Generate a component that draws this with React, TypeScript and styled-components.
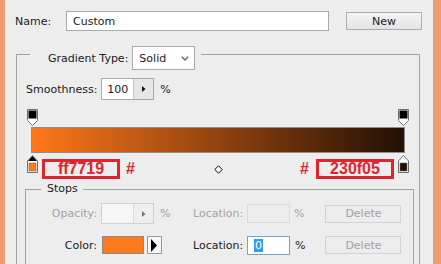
import React from 'react';
import styled, { createGlobalStyle } from 'styled-components';

const Global = createGlobalStyle`
  html, body { margin: 0; padding: 0; background: #ededed; }
  body { font-family: "DejaVu Sans", "Noto Sans", sans-serif; font-size: 11px; color: #1b1b1b; }
`;

const Frame = styled.div`
  width: 441px;
  height: 264px;
  overflow: hidden;
  display: flex;
  background: #ededed;
`;

const Edge = styled.div<{ $w: number }>`
  flex: 0 0 ${(p) => p.$w}px;
  background: #f09c72;
`;

const Panel = styled.div`
  flex: 1;
  min-width: 0;
  display: flex;
  flex-direction: column;
  padding-top: 11px;
`;

const NameRow = styled.div`
  display: flex;
  align-items: center;
  height: 20px;
  padding-left: 10px;
`;

const NameLabel = styled.span`
  width: 51px;
`;

const TextBox = styled.div`
  box-sizing: border-box;
  width: 263px;
  height: 20px;
  border: 1px solid #a9a9a9;
  background: #fff;
  padding-left: 6px;
  display: flex;
  align-items: center;
`;

const Button = styled.div<{ $disabled?: boolean; $ml: number }>`
  box-sizing: border-box;
  margin-left: ${(p) => p.$ml}px;
  width: 76px;
  height: 18px;
  display: flex;
  align-items: center;
  justify-content: center;
  border: 1px solid ${(p) => (p.$disabled ? '#d3d3d3' : '#acacac')};
  background: ${(p) => (p.$disabled ? '#ececec' : 'linear-gradient(#f3f3f3, #e4e4e4)')};
  color: ${(p) => (p.$disabled ? '#a2a2a2' : '#1b1b1b')};
`;

const Group = styled.div<{ $m: string }>`
  margin: ${(p) => p.$m};
  display: flex;
  flex-direction: column;
`;

const GroupHeader = styled.div<{ $h: number }>`
  display: flex;
  align-items: center;
  height: ${(p) => p.$h}px;
`;

const CornerLine = styled.div<{ $w: number; $h: number }>`
  box-sizing: border-box;
  align-self: flex-end;
  width: ${(p) => p.$w}px;
  height: ${(p) => p.$h}px;
  border-top: 1px solid #a3a3a3;
  border-left: 1px solid #a3a3a3;
`;

const TailLine = styled.div<{ $h: number; $ml: number }>`
  box-sizing: border-box;
  align-self: flex-end;
  flex: 1;
  margin-left: ${(p) => p.$ml}px;
  height: ${(p) => p.$h}px;
  border-top: 1px solid #a3a3a3;
  border-right: 1px solid #a3a3a3;
`;

const GroupBody = styled.div<{ $pt: number }>`
  border-left: 1px solid #a3a3a3;
  border-right: 1px solid #a3a3a3;
  padding: ${(p) => p.$pt}px 0 40px;
  display: flex;
  flex-direction: column;
`;

const HeaderText = styled.span<{ $ml: number }>`
  margin-left: ${(p) => p.$ml}px;
  white-space: nowrap;
`;

const Select = styled.div`
  box-sizing: border-box;
  margin-left: 4px;
  width: 63px;
  height: 24px;
  border: 1px solid #a9a9a9;
  background: #fff;
  display: flex;
  align-items: center;
  justify-content: space-between;
  padding: 0 5px 0 6px;
`;

const SmoothRow = styled.div`
  display: flex;
  align-items: center;
  height: 22px;
  padding-left: 9px;
`;

const SmoothLabel = styled.span`
  margin-right: 4px;
`;

const Spin = styled.div<{ $disabled?: boolean; $h: number }>`
  box-sizing: border-box;
  display: flex;
  width: 53px;
  height: ${(p) => p.$h}px;
  border: 1px solid ${(p) => (p.$disabled ? '#cfcfcf' : '#a9a9a9')};
`;

const SpinField = styled.div<{ $disabled?: boolean }>`
  flex: 0 0 31px;
  background: ${(p) => (p.$disabled ? '#f6f6f6' : '#fff')};
  display: flex;
  align-items: center;
  padding-left: 5px;
  box-sizing: border-box;
`;

const SpinArrow = styled.div<{ $disabled?: boolean }>`
  flex: 1;
  border-left: 1px solid ${(p) => (p.$disabled ? '#dadada' : '#c4c4c4')};
  background: ${(p) => (p.$disabled ? '#efefef' : '#e6e6e6')};
  display: flex;
  align-items: center;
  justify-content: center;
`;

const Percent = styled.span<{ $ml: number; $disabled?: boolean }>`
  margin-left: ${(p) => p.$ml}px;
  color: ${(p) => (p.$disabled ? '#a2a2a2' : '#1b1b1b')};
`;

const GradientArea = styled.div`
  margin: 9px 0 0 10px;
  width: 382px;
  display: flex;
  flex-direction: column;
`;

const StopRow = styled.div<{ $h: number; $mt: number }>`
  display: flex;
  justify-content: space-between;
  align-items: flex-start;
  height: ${(p) => p.$h}px;
  margin-top: ${(p) => p.$mt}px;
`;

const Bar = styled.div`
  margin: 1px 4px 0;
  height: 26px;
  box-sizing: border-box;
  border: 1px solid #8d8d8d;
  background: linear-gradient(to right, #ff7719, #230f05);
`;

const Cluster = styled.div`
  display: flex;
  align-items: flex-start;
`;

const RedBox = styled.div<{ $ml: number; $mr?: number }>`
  box-sizing: border-box;
  margin: 4px ${(p) => p.$mr ?? 0}px 0 ${(p) => p.$ml}px;
  width: 78px;
  height: 20px;
  border: 3px solid #e1242c;
  color: #e1242c;
  font: bold 16px/14px "Liberation Sans", Arial, sans-serif;
  text-align: center;
`;

const Hash = styled.span<{ $ml: number }>`
  margin: 4px 0 0 ${(p) => p.$ml}px;
  color: #e1242c;
  font: bold 16px/20px "Liberation Sans", Arial, sans-serif;
`;

const DiamondBox = styled.div`
  margin: 10px 0 0 2px;
  display: flex;
`;

const StopsRow = styled.div<{ $h: number; $mt: number }>`
  display: flex;
  align-items: center;
  height: ${(p) => p.$h}px;
  margin-top: ${(p) => p.$mt}px;
`;

const RowLabel = styled.span<{ $disabled?: boolean }>`
  width: 71px;
  margin-right: 4px;
  text-align: right;
  color: ${(p) => (p.$disabled ? '#a2a2a2' : '#1b1b1b')};
`;

const ControlCell = styled.div`
  width: 92px;
  display: flex;
  align-items: center;
`;

const Swatch = styled.div`
  box-sizing: border-box;
  margin-left: 1px;
  width: 42px;
  height: 18px;
  border: 1px solid #8a8a8a;
  background: #fd7a1c;
`;

const PickerButton = styled.div`
  box-sizing: border-box;
  margin-left: 3px;
  width: 15px;
  height: 18px;
  border: 1px solid #9a9a9a;
  background: #f7f7f7;
  display: flex;
  align-items: center;
  padding-left: 3px;
`;

const LocLabel = styled.span<{ $disabled?: boolean }>`
  width: 54px;
  color: ${(p) => (p.$disabled ? '#a2a2a2' : '#1b1b1b')};
`;

const LocInput = styled.div<{ $state: 'disabled' | 'focus' }>`
  box-sizing: border-box;
  width: 43px;
  height: 19px;
  display: flex;
  align-items: center;
  padding-left: 6px;
  border: 1px solid ${(p) => (p.$state === 'focus' ? '#7f9fcf' : '#d9d9d9')};
  background: ${(p) => (p.$state === 'focus' ? '#fff' : '#ececec')};
`;

const Selected = styled.span`
  background: #3399ff;
  color: #fff;
  padding: 0 1px;
  line-height: 13px;
`;

const TopStop = () => (
  <svg width="11" height="17" viewBox="0 0 11 17">
    <path d="M0.5 0.5H10.5V11.5L5.5 16.5L0.5 11.5Z" fill="#fff" stroke="#6f6f6f" />
    <rect x="1.5" y="1.5" width="8" height="8" fill="#000" />
  </svg>
);

const BottomStop = ({ color, selected }: { color: string; selected?: boolean }) => (
  <svg width="11" height="18" viewBox="0 0 11 18">
    <path d="M5.5 0.5L10.5 6V17.5H0.5V6Z" fill="#fff" stroke="#6f6f6f" />
    {selected && <path d="M5.5 1L10 6H1Z" fill="#000" />}
    <rect x="2" y="8" width="7" height="8" fill={color} stroke="#6f6f6f" strokeWidth="0.6" />
  </svg>
);

const Diamond = () => (
  <svg width="9" height="9" viewBox="0 0 9 9">
    <path d="M4.5 0.8L8.2 4.5L4.5 8.2L0.8 4.5Z" fill="#fff" stroke="#000" />
  </svg>
);

const Chevron = () => (
  <svg width="8" height="5" viewBox="0 0 8 5">
    <polyline points="0.8,0.8 4,4 7.2,0.8" fill="none" stroke="#666" strokeWidth="1.4" />
  </svg>
);

const SmallTri = ({ color }: { color: string }) => (
  <svg width="4" height="6" viewBox="0 0 4 6">
    <path d="M0 0L3.5 3L0 6Z" fill={color} />
  </svg>
);

const BigTri = () => (
  <svg width="6" height="13" viewBox="0 0 6 13">
    <path d="M0 0L6 6.5L0 13Z" fill="#000" />
  </svg>
);

export default function App() {
  return (
    <>
      <Global />
      <Frame>
        <Edge $w={5} />
        <Panel>
          <NameRow>
            <NameLabel>Name:</NameLabel>
            <TextBox>Custom</TextBox>
            <Button $ml={17}>New</Button>
          </NameRow>

          <Group $m="15px 13px 0 11px">
            <GroupHeader $h={24}>
              <CornerLine $w={14} $h={16} />
              <HeaderText $ml={18}>Gradient Type:</HeaderText>
              <Select>
                <span>Solid</span>
                <Chevron />
              </Select>
              <TailLine $h={16} $ml={6} />
            </GroupHeader>
            <GroupBody $pt={8}>
              <SmoothRow>
                <SmoothLabel>Smoothness:</SmoothLabel>
                <Spin $h={22}>
                  <SpinField>100</SpinField>
                  <SpinArrow>
                    <SmallTri color="#111" />
                  </SpinArrow>
                </Spin>
                <Percent $ml={6}>%</Percent>
              </SmoothRow>

              <GradientArea>
                <StopRow $h={17} $mt={0}>
                  <TopStop />
                  <TopStop />
                </StopRow>
                <Bar />
                <StopRow $h={24} $mt={2}>
                  <Cluster>
                    <BottomStop color="#fd7a1c" selected />
                    <RedBox $ml={4}>ff7719</RedBox>
                    <Hash $ml={6}>#</Hash>
                  </Cluster>
                  <DiamondBox>
                    <Diamond />
                  </DiamondBox>
                  <Cluster>
                    <Hash $ml={0}>#</Hash>
                    <RedBox $ml={7} $mr={4}>230f05</RedBox>
                    <BottomStop color="#230f05" />
                  </Cluster>
                </StopRow>
              </GradientArea>

              <Group $m="2px 5px 0 8px">
                <GroupHeader $h={14}>
                  <CornerLine $w={16} $h={6} />
                  <HeaderText $ml={6}>Stops</HeaderText>
                  <TailLine $h={6} $ml={5} />
                </GroupHeader>
                <GroupBody $pt={8}>
                  <StopsRow $h={21} $mt={0}>
                    <RowLabel $disabled>Opacity:</RowLabel>
                    <ControlCell>
                      <Spin $h={21} $disabled>
                        <SpinField $disabled />
                        <SpinArrow $disabled>
                          <SmallTri color="#777" />
                        </SpinArrow>
                      </Spin>
                      <Percent $ml={6} $disabled>%</Percent>
                    </ControlCell>
                    <LocLabel $disabled>Location:</LocLabel>
                    <LocInput $state="disabled" />
                    <Percent $ml={4} $disabled>%</Percent>
                    <Button $ml={21} $disabled>Delete</Button>
                  </StopsRow>
                  <StopsRow $h={18} $mt={12}>
                    <RowLabel>Color:</RowLabel>
                    <ControlCell>
                      <Swatch />
                      <PickerButton>
                        <BigTri />
                      </PickerButton>
                    </ControlCell>
                    <LocLabel>Location:</LocLabel>
                    <LocInput $state="focus">
                      <Selected>0</Selected>
                    </LocInput>
                    <Percent $ml={5}>%</Percent>
                    <Button $ml={20} $disabled>Delete</Button>
                  </StopsRow>
                </GroupBody>
              </Group>
            </GroupBody>
          </Group>
        </Panel>
        <Edge $w={8} />
      </Frame>
    </>
  );
}
